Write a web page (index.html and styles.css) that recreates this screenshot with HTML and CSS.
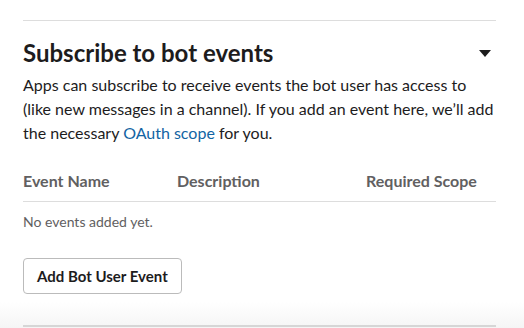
FILE: index.html
```html
<!DOCTYPE html>
<html>
<head>
    <title>Event Subscriptions</title>
    <link rel="stylesheet" href="styles.css">
</head>
<body>
    <div class="section">
        <div class="section-header">
            <h2>Subscribe to bot events</h2>
            <span class="caret"></span>
        </div>
        <p class="section-desc">Apps can subscribe to receive events the bot user has access to (like new messages in a channel). If you add an event here, we’ll add the necessary <a href="#">OAuth scope</a> for you.</p>

        <div class="events-table">
            <div class="table-head">
                <span class="col-name">Event Name</span>
                <span class="col-desc">Description</span>
                <span class="col-scope">Required Scope</span>
            </div>
            <div class="empty-row">No events added yet.</div>
        </div>

        <button class="btn" type="button">Add Bot User Event</button>
    </div>
    <div class="footer-fade">
        <div class="next-section"></div>
    </div>
</body>
</html>
```

FILE: styles.css
```css
body {
    margin: 0;
    font-family: Lato, "Open Sans", sans-serif;
    background: #fff;
    color: #1d1c1d;
}

.section {
    margin: 20px 28px 0 23px;
    padding-top: 20px;
    border-top: 1px solid #dddddd;
}

.section-header {
    display: flex;
    align-items: center;
    justify-content: space-between;
    height: 24px;
}

h2 {
    margin: 0;
    font-size: 24px;
    font-weight: 700;
    line-height: 24px;
}

.caret {
    width: 0;
    height: 0;
    border-left: 6px solid transparent;
    border-right: 6px solid transparent;
    border-top: 7px solid #1d1c1d;
    margin-right: 5px;
}

.section-desc {
    margin: 8px 0 0;
    font-size: 16px;
    line-height: 24px;
}

.section-desc a {
    color: #1264a3;
    text-decoration: none;
}

.events-table {
    margin-top: 26px;
}

.table-head {
    display: flex;
    font-size: 16px;
    font-weight: 700;
    color: #616061;
    padding-bottom: 11px;
    border-bottom: 1px solid #dddddd;
}

.col-name {
    width: 154px;
}

.col-desc {
    width: 189px;
}

.empty-row {
    font-size: 14px;
    color: #616061;
    padding-top: 11px;
}

.btn {
    margin-top: 28px;
    height: 36px;
    padding: 0 13px;
    font-family: Lato, sans-serif;
    font-size: 15px;
    font-weight: 700;
    color: #1d1c1d;
    background: #fff;
    border: 1px solid #bbbbbb;
    border-radius: 4px;
}

.footer-fade {
    position: absolute;
    left: 0;
    right: 0;
    top: 302px;
    height: 26px;
    background: linear-gradient(#ffffff, #f5f5f5);
    z-index: -1;
}

.next-section {
    margin: 23px 28px 0 23px;
    border-top: 2px solid #d6d6d6;
}
```
